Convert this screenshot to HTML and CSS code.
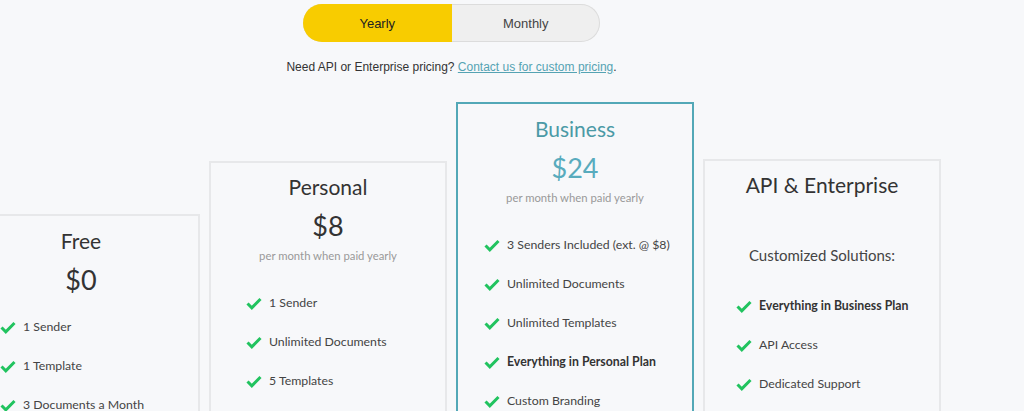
FILE: index.html
```html
<!DOCTYPE html>
<html>
<head>
<meta charset="utf-8">
<link rel="stylesheet" href="styles.css">
</head>
<body>
<main class="pricing">
  <div class="toggle">
    <button class="toggle-btn active">Yearly</button>
    <button class="toggle-btn">Monthly</button>
  </div>
  <p class="note">Need API or Enterprise pricing? <a href="#">Contact us for custom pricing</a>.</p>
  <div class="cards">
    <section class="card card-free">
      <h2 class="title">Free</h2>
      <div class="price">$0</div>
      <ul class="features list-free">
        <li><svg class="check" viewBox="0 0 16 13"><path d="M1.5 6.5 L5.8 10.8 L14.5 2"/></svg>1 Sender</li>
        <li><svg class="check" viewBox="0 0 16 13"><path d="M1.5 6.5 L5.8 10.8 L14.5 2"/></svg>1 Template</li>
        <li><svg class="check" viewBox="0 0 16 13"><path d="M1.5 6.5 L5.8 10.8 L14.5 2"/></svg>3 Documents a Month</li>
      </ul>
    </section>
    <section class="card card-personal">
      <h2 class="title">Personal</h2>
      <div class="price">$8</div>
      <div class="sub">per month when paid yearly</div>
      <ul class="features list-personal">
        <li><svg class="check" viewBox="0 0 16 13"><path d="M1.5 6.5 L5.8 10.8 L14.5 2"/></svg>1 Sender</li>
        <li><svg class="check" viewBox="0 0 16 13"><path d="M1.5 6.5 L5.8 10.8 L14.5 2"/></svg>Unlimited Documents</li>
        <li><svg class="check" viewBox="0 0 16 13"><path d="M1.5 6.5 L5.8 10.8 L14.5 2"/></svg>5 Templates</li>
      </ul>
    </section>
    <section class="card card-business">
      <h2 class="title">Business</h2>
      <div class="price">$24</div>
      <div class="sub">per month when paid yearly</div>
      <ul class="features list-business">
        <li><svg class="check" viewBox="0 0 16 13"><path d="M1.5 6.5 L5.8 10.8 L14.5 2"/></svg>3 Senders Included (ext. @ $8)</li>
        <li><svg class="check" viewBox="0 0 16 13"><path d="M1.5 6.5 L5.8 10.8 L14.5 2"/></svg>Unlimited Documents</li>
        <li><svg class="check" viewBox="0 0 16 13"><path d="M1.5 6.5 L5.8 10.8 L14.5 2"/></svg>Unlimited Templates</li>
        <li class="bold"><svg class="check" viewBox="0 0 16 13"><path d="M1.5 6.5 L5.8 10.8 L14.5 2"/></svg>Everything in Personal Plan</li>
        <li><svg class="check" viewBox="0 0 16 13"><path d="M1.5 6.5 L5.8 10.8 L14.5 2"/></svg>Custom Branding</li>
      </ul>
    </section>
    <section class="card card-api">
      <h2 class="title">API &amp; Enterprise</h2>
      <div class="custom">Customized Solutions:</div>
      <ul class="features list-api">
        <li class="bold"><svg class="check" viewBox="0 0 16 13"><path d="M1.5 6.5 L5.8 10.8 L14.5 2"/></svg>Everything in Business Plan</li>
        <li><svg class="check" viewBox="0 0 16 13"><path d="M1.5 6.5 L5.8 10.8 L14.5 2"/></svg>API Access</li>
        <li><svg class="check" viewBox="0 0 16 13"><path d="M1.5 6.5 L5.8 10.8 L14.5 2"/></svg>Dedicated Support</li>
      </ul>
    </section>
  </div>
</main>
</body>
</html>
```
FILE: styles.css
```css
html, body {
  margin: 0;
  padding: 0;
  overflow: hidden;
  background: #f7f8fa;
  height: 411px;
}
.pricing {
  width: 903px;
  display: flex;
  flex-direction: column;
  align-items: center;
  font-family: Lato, "Liberation Sans", sans-serif;
  color: #333;
}
.toggle {
  margin-top: 4px;
  display: flex;
  width: 297px;
  height: 38px;
  border-radius: 19px;
  overflow: hidden;
  background: #efefef;
  box-shadow: inset 0 0 0 1px #dcdcdc;
}
.toggle-btn {
  flex: 1;
  border: 0;
  background: transparent;
  font-family: "Liberation Sans", Arial, sans-serif;
  font-size: 13px;
  color: #444;
  padding: 0;
  margin: 0;
}
.toggle-btn.active {
  background: #f8cc00;
  color: #222;
}
.note {
  margin: 17px 0 0;
  font-family: "Liberation Sans", Arial, sans-serif;
  font-size: 12px;
  line-height: 16px;
  color: #333;
}
.note a {
  color: #55a3b3;
  text-decoration: underline;
}
.cards {
  margin-top: 27px;
  display: flex;
  justify-content: center;
  align-items: flex-start;
  gap: 9px;
  width: 100%;
}
.card {
  flex: 0 0 238px;
  box-sizing: border-box;
  width: 238px;
  height: 420px;
  border: 2px solid #e7e8ea;
  padding-top: 11px;
  display: flex;
  flex-direction: column;
  align-items: center;
}
.card-free { margin-top: 112px; padding-top: 12px; }
.card-personal { margin-top: 59px; }
.card-business { margin-top: 0; border-color: #53a8b7; padding-top: 12px; }
.card-api { margin-top: 57px; }
.title {
  margin: 0;
  font-size: 21px;
  line-height: 26px;
  font-weight: 400;
  color: #333;
}
.card-business .title { color: #4b9aa6; }
.price {
  margin-top: 8px;
  font-size: 27px;
  line-height: 36px;
  color: #333;
}
.card-business .price { color: #58abbd; }
.sub {
  margin-top: 4px;
  font-size: 11.3px;
  line-height: 16px;
  color: #999;
}
.custom {
  margin-top: 46px;
  font-size: 15px;
  line-height: 22px;
  color: #444;
}
.features {
  list-style: none;
  margin: 29px 0 0;
  padding: 0;
  align-self: stretch;
}
.list-free { margin-top: 19px; padding-left: 36px; }
.list-personal { padding-left: 35px; }
.list-business { padding-left: 26px; }
.list-api { margin-top: 30px; padding-left: 31px; }
.features li {
  display: flex;
  align-items: center;
  font-size: 12.3px;
  line-height: 20px;
  height: 20px;
  margin-bottom: 19px;
  color: #444;
}
.features li.bold {
  font-weight: 700;
  color: #333;
}
.check {
  width: 16px;
  height: 13px;
  margin-right: 7px;
  flex: 0 0 16px;
}
.check path {
  fill: none;
  stroke: #21c35f;
  stroke-width: 3;
  stroke-linecap: butt;
  stroke-linejoin: miter;
}
```
